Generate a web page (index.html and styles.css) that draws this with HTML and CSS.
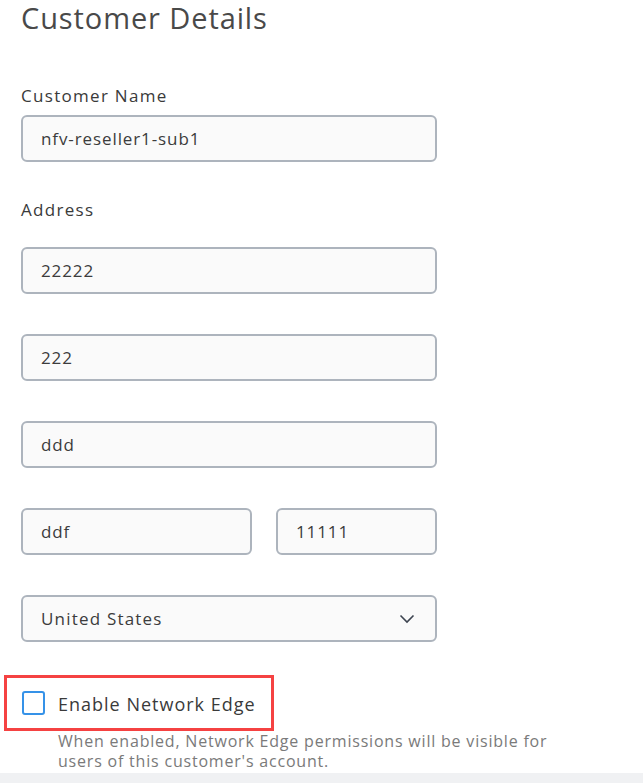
FILE: index.html
```html
<!DOCTYPE html>
<html>
<head>
    <meta charset="utf-8">
    <title>Customer Details</title>
    <link rel="stylesheet" href="styles.css">
</head>
<body>
    <div class="page">
        <h1>Customer Details</h1>

        <div class="field">
            <label class="field-label">Customer Name</label>
            <div class="input">nfv-reseller1-sub1</div>
        </div>

        <div class="field address">
            <label class="field-label">Address</label>
            <div class="address-lines">
                <div class="input">22222</div>
                <div class="input">222</div>
                <div class="input">ddd</div>
                <div class="input-row">
                    <div class="input">ddf</div>
                    <div class="input">11111</div>
                </div>
                <div class="input select">
                    <span>United States</span>
                    <svg width="16" height="10" viewBox="0 0 16 10"><path d="M1.5 1.5 L8 8 L14.5 1.5" fill="none" stroke="#3d4450" stroke-width="1.6"/></svg>
                </div>
            </div>
        </div>

        <div class="network-edge">
            <div class="highlight">
                <span class="checkbox"></span>
                <span class="check-label">Enable Network Edge</span>
            </div>
            <p class="help">When enabled, Network Edge permissions will be visible for<br>users of this customer's account.</p>
        </div>
    </div>
    <div class="footer-strip"></div>
</body>
</html>
```

FILE: styles.css
```css
* {
    margin: 0;
    padding: 0;
    box-sizing: border-box;
}

body {
    background: #fff;
    font-family: 'Open Sans', 'Lato', sans-serif;
    color: #333;
    width: 643px;
    height: 783px;
    overflow: hidden;
}

.page {
    padding: 0 0 0 21px;
    height: 773px;
}

h1 {
    font-size: 29px;
    font-weight: 400;
    color: #494949;
    line-height: 36px;
    letter-spacing: 0.9px;
}

.field {
    margin-top: 50px;
    width: 416px;
}

.field-label {
    display: block;
    font-size: 17px;
    line-height: 20px;
    letter-spacing: 1.3px;
    color: #3a3a3a;
    margin-bottom: 9px;
}

.input {
    height: 47px;
    border: 2px solid #adb4bd;
    border-radius: 6px;
    background: #fafafa;
    padding: 0 18px;
    display: flex;
    align-items: center;
    font-size: 17px;
    letter-spacing: 0.9px;
    color: #3c3c3c;
}

.address {
    margin-top: 38px;
}

.address .field-label {
    margin-bottom: 27px;
}

.address-lines {
    display: flex;
    flex-direction: column;
    gap: 40px;
}

.input-row {
    display: flex;
    gap: 24px;
}

.input-row .input:first-child {
    width: 231px;
}

.input-row .input:last-child {
    flex: 1;
}

.select {
    justify-content: space-between;
    padding-right: 20px;
    letter-spacing: 1.2px;
}

.network-edge {
    margin-left: -17px;
    margin-top: 33px;
}

.highlight {
    display: inline-flex;
    align-items: center;
    border: 3px solid #f54242;
    width: 270px;
    height: 56px;
    padding-left: 15px;
}

.checkbox {
    width: 23px;
    height: 24px;
    border: 2px solid #3592e8;
    border-radius: 3px;
    margin-right: 13px;
}

.check-label {
    font-size: 18px;
    letter-spacing: 1px;
    color: #3a3a3a;
    padding-top: 2px;
}

.help {
    margin-left: 54px;
    font-size: 16px;
    line-height: 20px;
    letter-spacing: 0.8px;
    color: #7a7a7a;
    margin-top: 0;
}

.footer-strip {
    height: 10px;
    background: #f0f1f3;
}
```
